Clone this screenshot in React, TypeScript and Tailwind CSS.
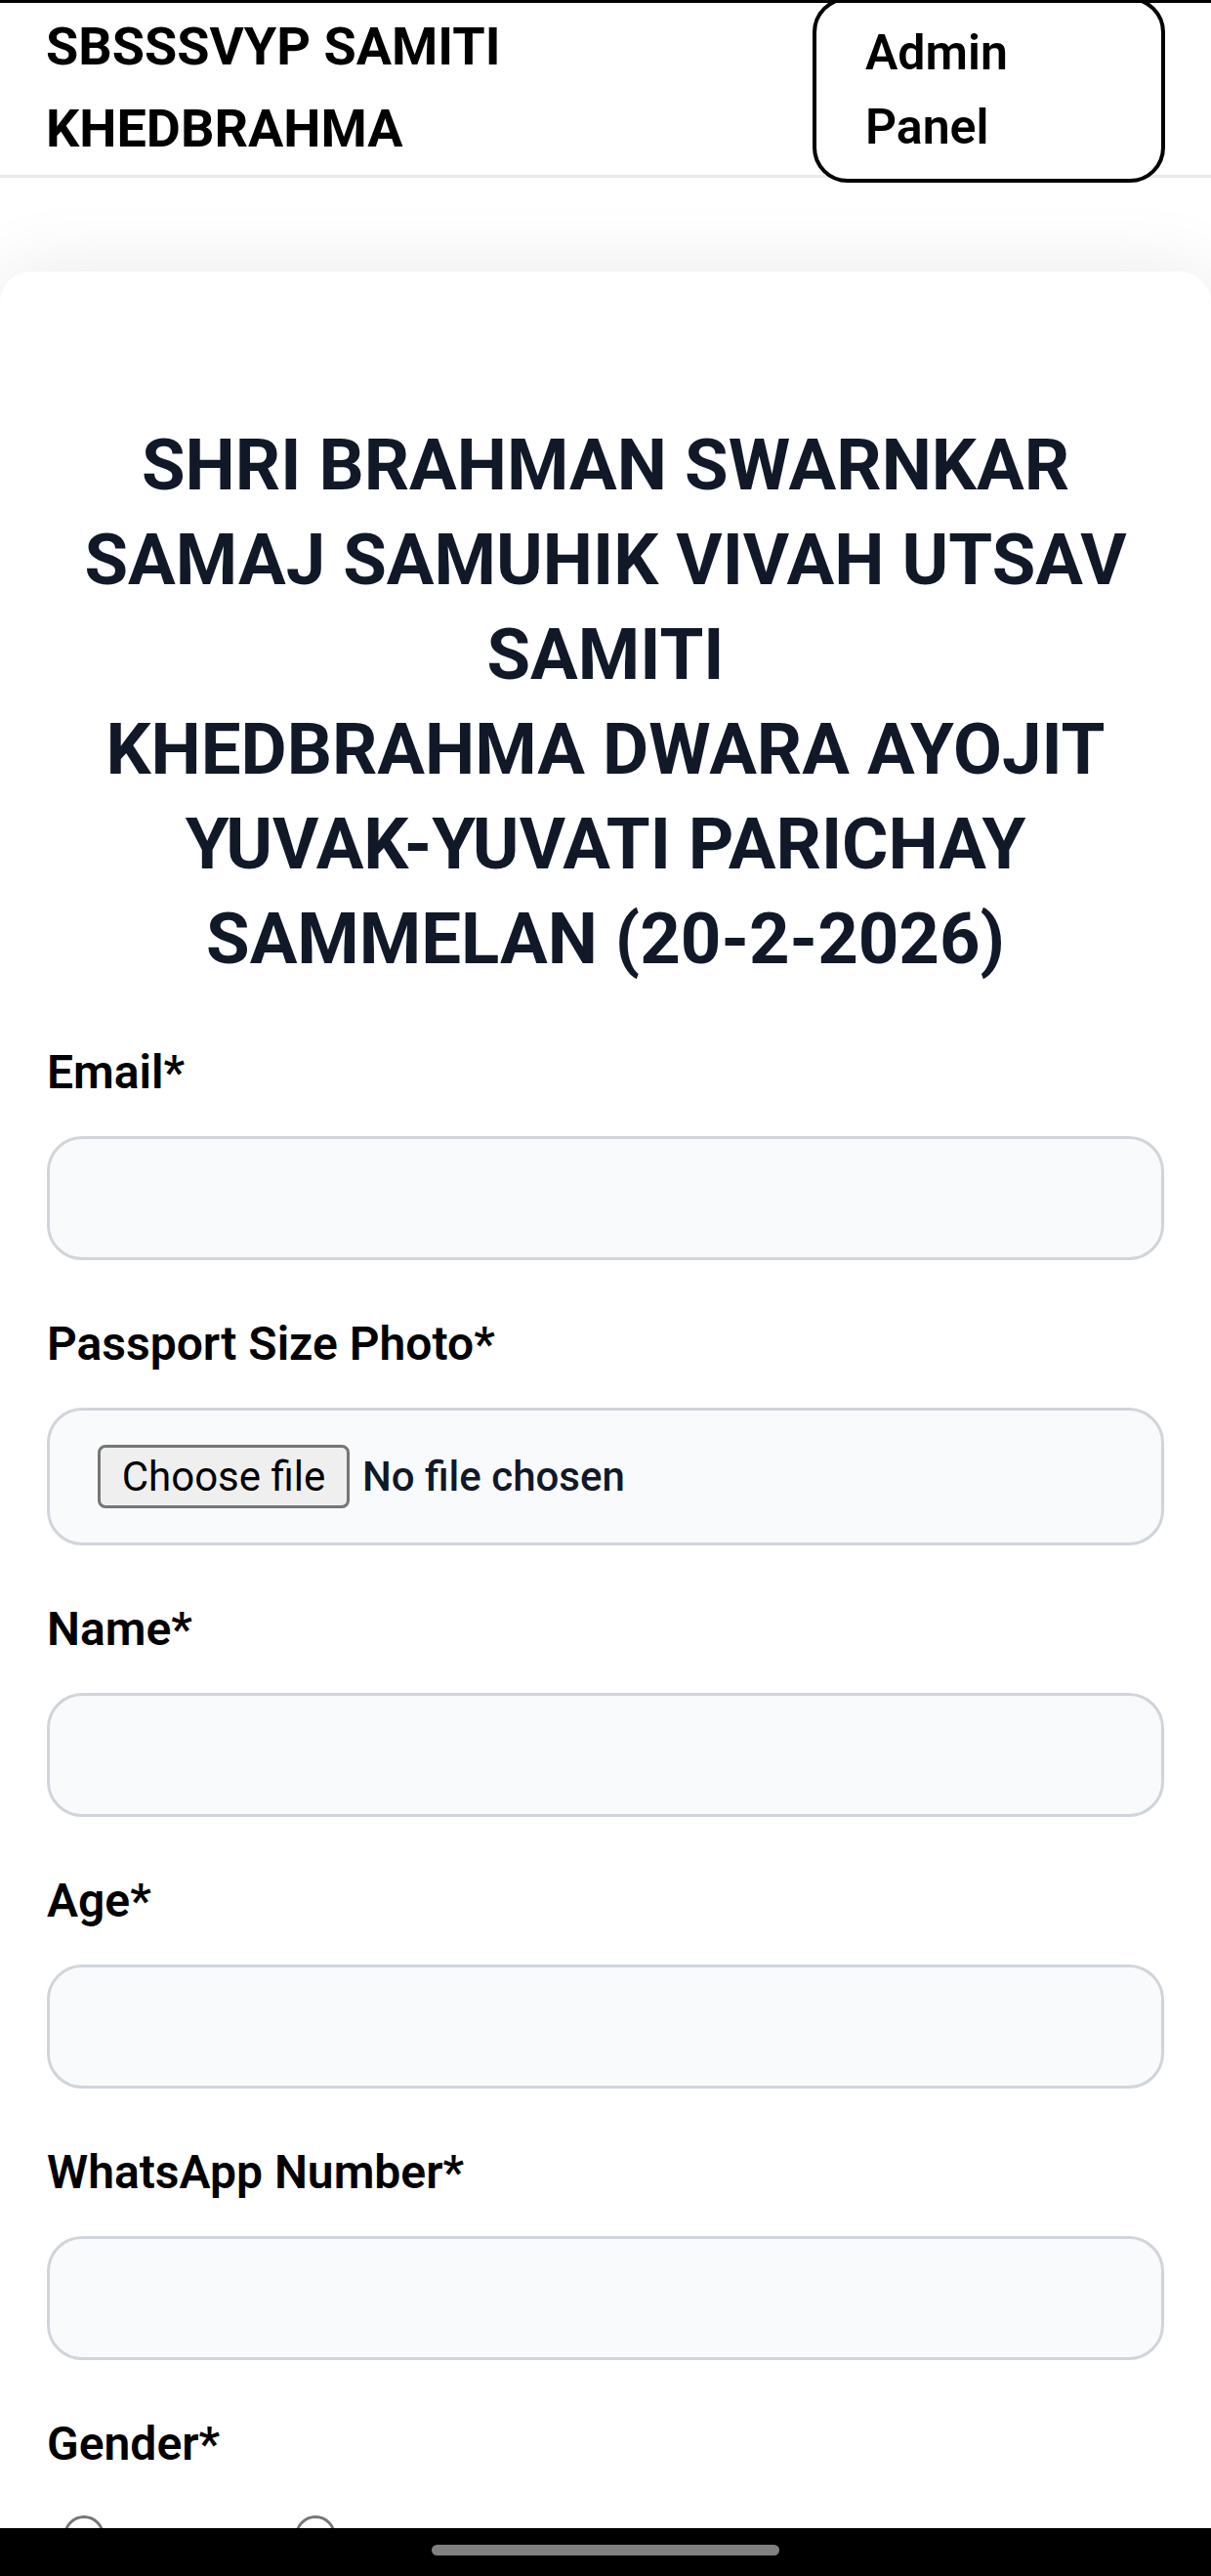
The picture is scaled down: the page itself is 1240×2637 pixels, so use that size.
import React from 'react';

const fields = [
  { label: 'Email*', kind: 'text' },
  { label: 'Passport Size Photo*', kind: 'file' },
  { label: 'Name*', kind: 'text' },
  { label: 'Age*', kind: 'text' },
  { label: 'WhatsApp Number*', kind: 'text' },
];

const Field = ({ label, kind }: { label: string; kind: string }) => {
  return (
    <div className="mb-[50px]">
      <label className="block text-[48px] leading-[72px] font-semibold text-black mb-[29px]">{label}</label>
      {kind === 'file' ? (
        <div className="h-[141px] w-full flex items-center pl-[49px] bg-[#f9fafb] border-[3px] border-[#d1d5db] rounded-[36px]">
          <span className="h-[65px] w-[258px] flex items-center justify-center bg-[#efefef] border-[3px] border-[#767676] rounded-[8px] text-[42px] text-black">
            Choose file
          </span>
          <span className="ml-[13px] text-[42px] font-medium text-[#111827]">No file chosen</span>
        </div>
      ) : (
        <input
          type="text"
          className="block h-[127px] w-full px-[48px] bg-[#f9fafb] border-[3px] border-[#d1d5db] rounded-[36px] text-[42px] text-[#111827] outline-none"
        />
      )}
    </div>
  );
};

const Radio = ({ label }: { label: string }) => (
  <label className="flex items-start">
    <span className="mt-[8px] ml-[17px] mr-[9px] w-[42px] h-[42px] rounded-full border-[3px] border-[#767676] bg-white" />
    <span className="mt-[12px] ml-[18px] text-[48px] leading-[72px] text-black">{label}</span>
  </label>
);

export default function App() {
  return (
    <div className="relative h-[2637px] overflow-hidden bg-white font-['Roboto','Liberation_Sans',sans-serif]">
      <header className="relative z-10 h-[182px] flex items-center justify-between px-[47px] border-b-[3px] border-[#e8e8e8] bg-white">
        <h1 className="text-[54px] leading-[84px] font-bold text-black">
          SBSSSVYP SAMITI
          <br />
          KHEDBRAHMA
        </h1>
        <button className="self-start -mt-[3px] h-[190px] w-[361px] px-[50px] py-[15px] text-left border-[4px] border-black rounded-[36px] bg-white text-[50px] leading-[76px] font-semibold text-black">
          Admin
          <br />
          Panel
        </button>
      </header>

      <main className="pt-[96px]">
        <div className="bg-white rounded-t-[32px] shadow-[0_0_80px_rgba(0,0,0,0.09)] px-[48px] pt-[150px] pb-20">
          <h2 className="text-center text-[72.5px] leading-[97px] font-bold text-[#111827] mb-[52px] whitespace-nowrap">
            SHRI BRAHMAN SWARNKAR
            <br />
            SAMAJ SAMUHIK VIVAH UTSAV
            <br />
            SAMITI
            <br />
            KHEDBRAHMA DWARA AYOJIT
            <br />
            YUVAK-YUVATI PARICHAY
            <br />
            SAMMELAN (20-2-2026)
          </h2>

          <form>
            {fields.map((f) => (
              <Field key={f.label} label={f.label} kind={f.kind} />
            ))}
            <div>
              <label className="block text-[48px] leading-[72px] font-semibold text-black mb-[29px]">Gender*</label>
              <div className="flex gap-[46px]">
                <Radio label="Male" />
                <Radio label="Female" />
              </div>
            </div>
          </form>
        </div>
      </main>

      {/* phone chrome */}
      <div className="absolute top-0 left-0 right-0 h-[3px] bg-black z-20" />
      <div className="absolute bottom-0 left-0 right-0 h-[49px] bg-black z-20 flex justify-center">
        <div className="mt-[17px] h-[11px] w-[356px] rounded-full bg-[#808080]" />
      </div>
    </div>
  );
}
